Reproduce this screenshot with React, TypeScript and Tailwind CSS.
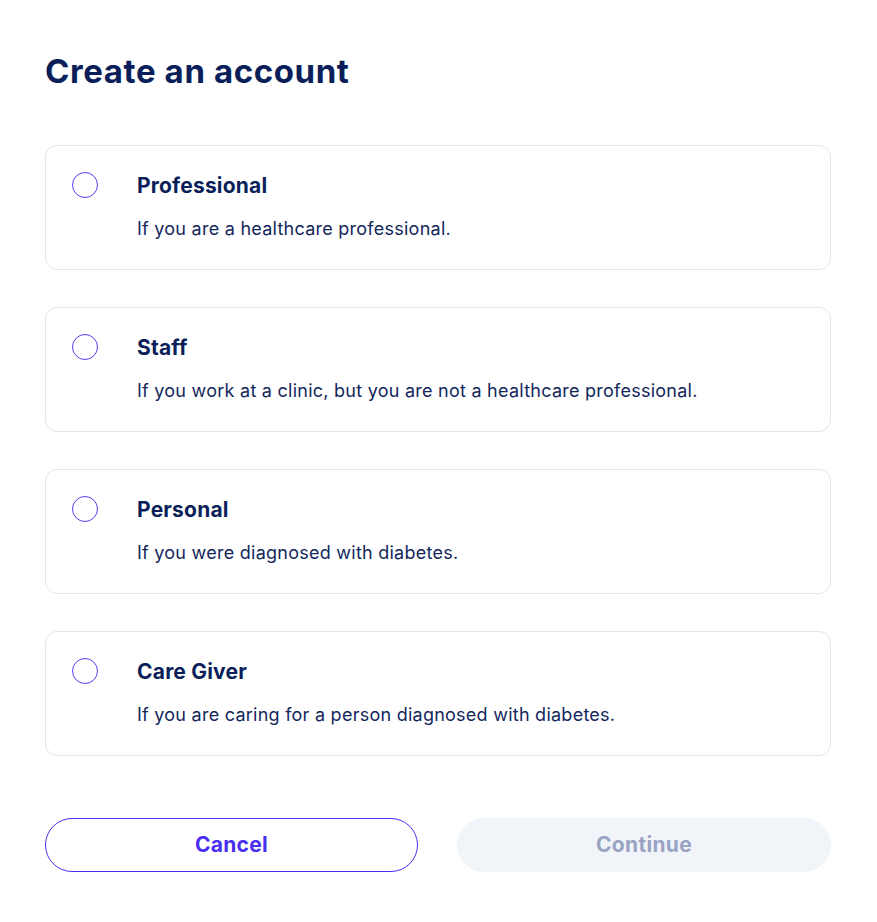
import * as React from 'react';

const options = [
    { title: 'Professional', desc: 'If you are a healthcare professional.' },
    { title: 'Staff', desc: 'If you work at a clinic, but you are not a healthcare professional.' },
    { title: 'Personal', desc: 'If you were diagnosed with diabetes.' },
    { title: 'Care Giver', desc: 'If you are caring for a person diagnosed with diabetes.' },
];

export default function App() {
    return (
        <div className="min-h-screen bg-white px-[45px] pt-[48px] font-['Inter',sans-serif] text-[#0a1f5a]">
            <h1 className="text-[33px] font-bold leading-[47px] tracking-[0.6px]">Create an account</h1>

            {/* danh sach loai tai khoan */}
            <div className="mt-[50px] flex w-[786px] flex-col gap-[37px]">
                {options.map((opt) => (
                    <label
                        key={opt.title}
                        className="flex cursor-pointer items-start rounded-[12px] border border-[#e1e6ef] pl-[26px] pt-[26px] pb-[28px]"
                    >
                        <span className="h-[26px] w-[26px] shrink-0 rounded-full border border-[#5a3cf0]" />
                        <div className="ml-[39px] flex flex-col">
                            <span className="pt-[1px] text-[21px] font-bold leading-[26px] tracking-[0.2px]">{opt.title}</span>
                            <span className="mt-[18px] text-[18px] leading-[24px] tracking-[0.25px] text-[#13275c]">{opt.desc}</span>
                        </div>
                    </label>
                ))}
            </div>

            <div className="mt-[62px] flex w-[786px] gap-[39px]">
                <button className="h-[54px] w-[373px] rounded-full border border-[#4a2ff0] text-[21px] font-bold tracking-[0.3px] text-[#4a2ff0]">
                    Cancel
                </button>
                <button disabled className="ml-auto h-[54px] w-[374px] rounded-full bg-[#f1f4f9] text-[21px] font-bold tracking-[0.3px] text-[#9aa3c4]">
                    Continue
                </button>
            </div>
        </div>
    );
}
